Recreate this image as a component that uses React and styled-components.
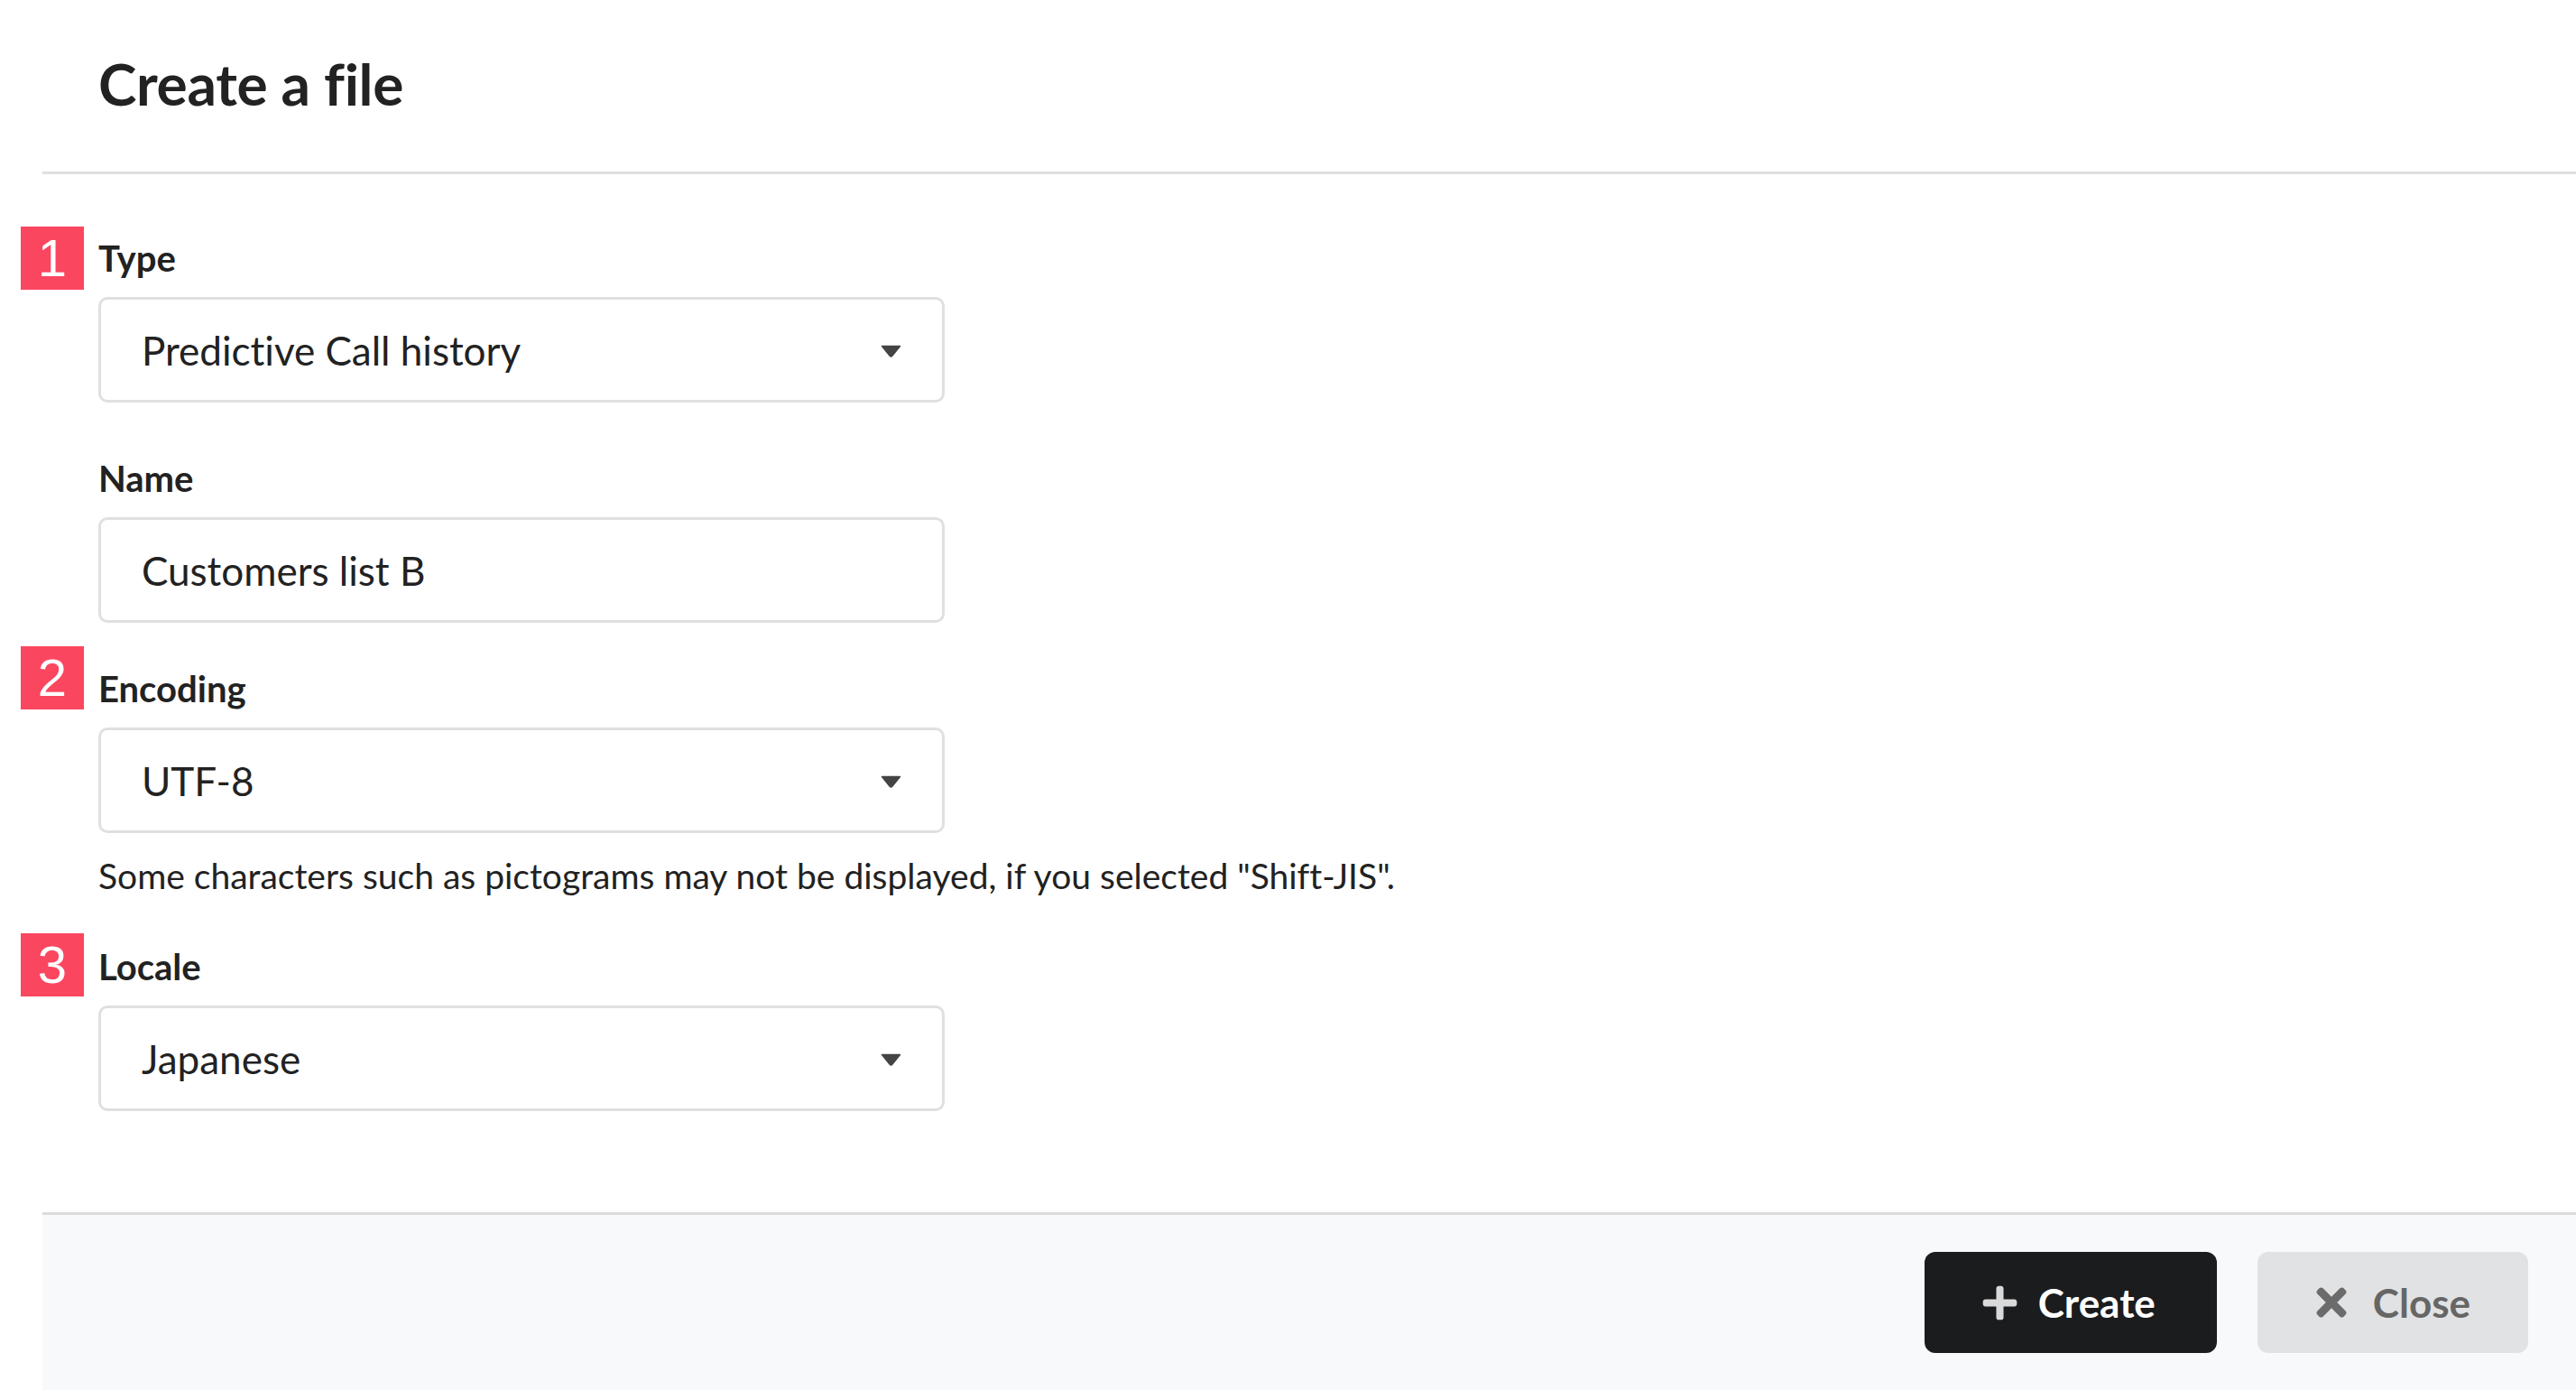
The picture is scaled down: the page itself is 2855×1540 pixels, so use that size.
import React from "react";
import styled, { createGlobalStyle } from "styled-components";
import { FaPlus, FaTimes } from "react-icons/fa";

const GlobalStyle = createGlobalStyle`
	html, body {
		margin: 0;
		padding: 0;
		background: #ffffff;
	}
	body {
		font-family: Lato, "Noto Sans", "Liberation Sans", sans-serif;
		color: #222222;
		font-variant-ligatures: none;
	}
	* {
		box-sizing: border-box;
	}
`;

const fields = [
	{ key: "type", badge: "1", badgeTop: -11, label: "Type", value: "Predictive Call history", select: true, gap: 60 },
	{ key: "name", label: "Name", value: "Customers list B", gap: 49 },
	{
		key: "encoding",
		badge: "2",
		badgeTop: -23,
		label: "Encoding",
		value: "UTF-8",
		select: true,
		help: 'Some characters such as pictograms may not be displayed, if you selected "Shift-JIS".',
		gap: 53,
	},
	{ key: "locale", badge: "3", badgeTop: -13, label: "Locale", value: "Japanese", select: true, gap: 0 },
];

const Caret = () => (
	<svg width="23" height="14" viewBox="0 0 23 14">
		<path d="M1.5 1.5 H21.5 L12.8 12.2 Q11.5 13.6 10.2 12.2 Z" fill="#444444" stroke="#444444" strokeWidth="1.5" strokeLinejoin="round" />
	</svg>
);

const App = () => {
	return (
		<Page>
			<GlobalStyle />
			<Header>
				<Title>Create a file</Title>
			</Header>

			<Body>
				{fields.map((f) => (
					<Field key={f.key} $gap={f.gap}>
						{f.badge && <Badge $top={f.badgeTop}>{f.badge}</Badge>}
						<Label>{f.label}</Label>
						{f.select ? (
							<SelectBox>
								<span>{f.value}</span>
								<Caret />
							</SelectBox>
						) : (
							<TextInput defaultValue={f.value} readOnly />
						)}
						{f.help && <Help>{f.help}</Help>}
					</Field>
				))}
			</Body>

			<Footer>
				<Button $variant="primary">
					<FaPlus size={43} />
					<span>Create</span>
				</Button>
				<Button $variant="secondary">
					<FaTimes size={48} />
					<span>Close</span>
				</Button>
			</Footer>
		</Page>
	);
};

export default App;

const Page = styled.div`
	width: 2855px;
	min-height: 1540px;
	padding-left: 47px;
	display: flex;
	flex-direction: column;
`;

const Header = styled.div`
	padding: 54px 0 59px 62px;
	border-bottom: 3px solid #dfdfdf;
`;

const Title = styled.h1`
	margin: 0;
	font-size: 64px;
	line-height: 77px;
	font-weight: 700;
	color: #222222;
	letter-spacing: -0.3px;
	font-variant-ligatures: common-ligatures;
`;

const Body = styled.div`
	padding: 69px 0 112px 62px;
	display: flex;
	flex-direction: column;
`;

const Field = styled.div`
	position: relative;
	width: 938px;
	display: flex;
	flex-direction: column;
	margin-bottom: ${(p) => p.$gap}px;
`;

const Badge = styled.div`
	position: absolute;
	left: -86px;
	top: ${(p) => p.$top}px;
	width: 70px;
	height: 70px;
	background-color: #fb4660;
	color: #ffffff;
	font-family: "Liberation Sans", Arial, sans-serif;
	font-size: 58px;
	line-height: 70px;
	text-align: center;
`;

const Label = styled.label`
	font-size: 40px;
	line-height: 48px;
	font-weight: 700;
	color: #222222;
	margin-bottom: 19px;
`;

const boxStyles = `
	width: 938px;
	height: 117px;
	border: 3px solid #e0e0e0;
	border-radius: 10px;
	background: #ffffff;
	font-family: Lato, "Noto Sans", sans-serif;
	font-variant-ligatures: none;
	font-size: 44px;
	color: #222222;
	padding: 0 45px 0 45px;
`;

const SelectBox = styled.div`
	${boxStyles}
	display: flex;
	align-items: center;
	justify-content: space-between;

	svg {
		margin-top: 2px;
	}
`;

const TextInput = styled.input`
	${boxStyles}
	outline: none;
	display: block;
`;

const Help = styled.p`
	margin: 24px 0 0 0;
	font-size: 39px;
	line-height: 47px;
	color: #222222;
	white-space: nowrap;
`;

const Footer = styled.div`
	border-top: 3px solid #dcdcdc;
	background-color: #f8f9fa;
	padding: 41px 53px 41px 0;
	display: flex;
	justify-content: flex-end;
	gap: 45px;
`;

const Button = styled.button`
	height: 112px;
	border: none;
	border-radius: 12px;
	display: flex;
	align-items: center;
	gap: ${(p) => (p.$variant === "primary" ? "21px" : "22px")};
	padding: 0 ${(p) => (p.$variant === "primary" ? "68px" : "64px")} 0
		${(p) => (p.$variant === "primary" ? "62px" : "58px")};
	font-family: Lato, "Noto Sans", sans-serif;
	font-size: 44px;
	font-weight: 700;
	cursor: pointer;
	background-color: ${(p) => (p.$variant === "primary" ? "#1b1c1e" : "#e1e2e4")};
	color: ${(p) => (p.$variant === "primary" ? "#ffffff" : "#666666")};

	svg {
		color: ${(p) => (p.$variant === "primary" ? "#d9d9d9" : "#6b6b6b")};
		flex-shrink: 0;
	}
`;
